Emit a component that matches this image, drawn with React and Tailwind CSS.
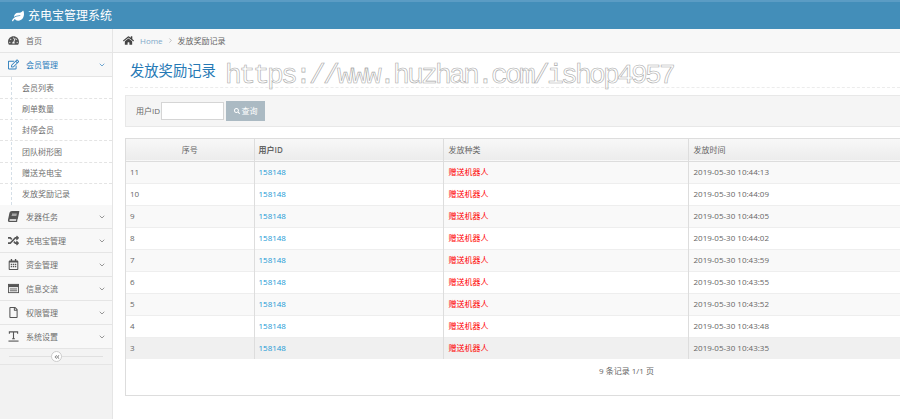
import { FaHome, FaLeaf, FaSearch, FaAngleDoubleLeft, FaTachometerAlt, FaRegEdit, FaBook, FaRandom, FaRegCalendarAlt, FaRegFile } from "react-icons/fa";
import { ChevronDown, ChevronRight } from "lucide-react";

const subMenu = ["会员列表", "刷单数量", "封停会员", "团队树形图", "赠送充电宝", "发放奖励记录"];

const SlantBook = ({ className }) => <FaBook className={`${className} -skew-x-12`} />;

const WindowIcon = ({ className }) => (
  <svg viewBox="0 0 12 10" className={className} fill="none">
    <rect x="0.5" y="0.5" width="11" height="9" stroke="currentColor" />
    <rect x="0.5" y="0.5" width="11" height="3" fill="currentColor" />
    <path d="M2 5.5h8M2 7.5h8" stroke="currentColor" />
  </svg>
);

const TextIcon = ({ className }) => (
  <svg viewBox="0 0 12 12" className={className} fill="none" stroke="currentColor">
    <path d="M1.5 3V1h9v2M6 1v7.5M4.5 8.5h3" strokeWidth="1.2" />
    <path d="M0.5 11h11" strokeWidth="1.2" />
  </svg>
);

const menuBottom = [
  { name: "发器任务", icon: SlantBook },
  { name: "充电宝管理", icon: FaRandom },
  { name: "资金管理", icon: FaRegCalendarAlt },
  { name: "信息交流", icon: WindowIcon },
  { name: "权限管理", icon: FaRegFile },
  { name: "系统设置", icon: TextIcon },
];

const records = [
  { id: 11, time: "2019-05-30 10:44:13" },
  { id: 10, time: "2019-05-30 10:44:09" },
  { id: 9, time: "2019-05-30 10:44:05" },
  { id: 8, time: "2019-05-30 10:44:02" },
  { id: 7, time: "2019-05-30 10:43:59" },
  { id: 6, time: "2019-05-30 10:43:55" },
  { id: 5, time: "2019-05-30 10:43:52" },
  { id: 4, time: "2019-05-30 10:43:48" },
  { id: 3, time: "2019-05-30 10:43:35" },
];

function MenuRow({ name, icon: Icon, active, noArrow }) {
  return (
    <div className={`flex h-[24px] items-center border-b border-[#e5e5e5] bg-[#f8f8f8] pl-[8px] pr-[6px] ${active ? "text-[#2b7dbc]" : "text-[#6e6e6e]"}`}>
      <span className="flex w-[18px] shrink-0 items-center">
        <Icon className={`h-[11px] w-[11px] ${active ? "text-[#2b7dbc]" : "text-[#555]"}`} />
      </span>
      <span className="flex-1 text-[8px]">{name}</span>
      {!noArrow && <ChevronDown className={`h-[8px] w-[8px] ${active ? "text-[#2b7dbc]" : "text-[#666]"}`} strokeWidth={2} />}
    </div>
  );
}

export default function App() {
  return (
    <div className="flex h-[419px] w-full flex-col overflow-hidden bg-white font-['Open_Sans','Noto_Sans_CJK_SC',sans-serif] text-[8px] text-[#666]">
      {/* Header */}
      <div className="flex h-[29px] shrink-0 items-center border-t-2 border-[#5b9cc4] bg-[#438eb9] pl-[12px] text-white">
        <FaLeaf className="mr-[4px] h-[12px] w-[12px]" />
        <span className="text-[12px]">充电宝管理系统</span>
      </div>

      <div className="flex min-h-0 flex-1">
        {/* Sidebar */}
        <div className="w-[113px] shrink-0 border-r border-[#e5e5e5] bg-[#f2f2f2]">
          <MenuRow name="首页" icon={FaTachometerAlt} noArrow />
          <MenuRow name="会员管理" icon={FaRegEdit} active />
          <div className="relative h-[128px] bg-white pt-[1px]">
            <div className="absolute bottom-0 left-[11px] top-0 border-l border-dashed border-[#d5dfe8]" />
            {subMenu.map((item) => (
              <div key={item} className="flex h-[21.16px] items-center border-b border-dashed border-[#e4e4e4] pl-[22px] text-[8px] text-[#707070] last:border-b-0">
                {item}
              </div>
            ))}
          </div>
          {menuBottom.map((item) => (
            <MenuRow key={item.name} name={item.name} icon={item.icon} />
          ))}
          <div className="relative flex h-[16px] items-center border-b border-[#e5e5e5] bg-[#f3f3f3] px-[9px]">
            <div className="h-px w-full bg-[#e0e0e0]" />
            <span className="absolute left-[51px] top-[2px] flex h-[11px] w-[11px] items-center justify-center rounded-full border border-[#ccc] bg-white">
              <FaAngleDoubleLeft className="h-[6px] w-[6px] text-[#888]" />
            </span>
          </div>
        </div>

        {/* Main */}
        <div className="relative min-w-0 flex-1 overflow-hidden">
          <div className="flex h-[24px] items-center border-b border-[#e5e5e5] bg-[#f8f8f8] pl-[10px]">
            <FaHome className="mr-[6px] h-[11px] w-[11px] text-[#444]" />
            <span className="text-[8px] text-[#7fa9c9]">Home</span>
            <ChevronRight className="mx-[4px] h-[7px] w-[7px] text-[#999]" />
            <span className="text-[8px] text-[#666]">发放奖励记录</span>
          </div>

          <div className="pl-[12px]">
            <div className="flex h-[35px] items-end border-b border-dashed border-[#ececec] pb-[9px] pl-[5px] text-[14.3px] leading-none text-[#2679b5]">
              发放奖励记录
            </div>

            <div className="mt-[7px] flex h-[32px] w-[900px] items-center border border-[#e8e8e8] bg-[#f5f5f5] pl-[10px]">
              <span className="mr-[1px] text-[8px]">用户ID</span>
              <div className="h-[18px] w-[63px] border border-[#d5d5d5] bg-white" />
              <div className="ml-[2px] flex h-[20px] w-[39px] items-center justify-center gap-[2px] bg-[#abbac3] text-[8px] text-white">
                <FaSearch className="h-[6px] w-[6px]" />
                查询
              </div>
            </div>

            <div className="mt-[11px] h-[258px] w-[900px] border border-[#dddddd]">
              <table className="w-full table-fixed border-collapse text-[8px]">
                <colgroup>
                  <col className="w-[128px]" />
                  <col className="w-[189px]" />
                  <col className="w-[245px]" />
                  <col />
                </colgroup>
                <thead>
                  <tr className="h-[22px] border-b border-[#ddd] bg-gradient-to-b from-[#f8f8f8] to-[#ececec]">
                    <th className="border-r border-[#ddd] text-center font-normal">序号</th>
                    <th className="border-r border-[#ddd] pl-[4px] text-left font-semibold">用户ID</th>
                    <th className="border-r border-[#ddd] pl-[5px] text-left font-normal">发放种类</th>
                    <th className="pl-[5px] text-left font-normal">发放时间</th>
                  </tr>
                </thead>
                <tbody>
                  {records.map((row, i) => (
                    <tr
                      key={row.id}
                      className={`h-[22px] border-b border-[#eeeeee] last:border-b-0 ${row.id === 3 ? "bg-[#f0f0f0]" : i % 2 === 0 ? "bg-[#f9f9f9]" : "bg-white"}`}
                    >
                      <td className="border-r border-[#ddd] pl-[4px]">{row.id}</td>
                      <td className="border-r border-[#ddd] pl-[4px] text-[#1a9ad6]">158148</td>
                      <td className="border-r border-[#ddd] pl-[5px] text-[#ff0000]">赠送机器人</td>
                      <td className="pl-[5px]">{row.time}</td>
                    </tr>
                  ))}
                </tbody>
              </table>
              <div className="mt-[6px] pl-[473px] text-[8px]">9 条记录 1/1 页</div>
            </div>
          </div>

          {/* site watermark over the page */}
          <div className="absolute left-[112px] top-[34px] whitespace-nowrap font-['Liberation_Mono',monospace] text-[28px] leading-[25px] tracking-[-2.8px] text-transparent opacity-[0.99] [-webkit-text-stroke:0.6px_#aaaaaa]">
            https://www.huzhan.com/ishop4957
          </div>
        </div>
      </div>
    </div>
  );
}
